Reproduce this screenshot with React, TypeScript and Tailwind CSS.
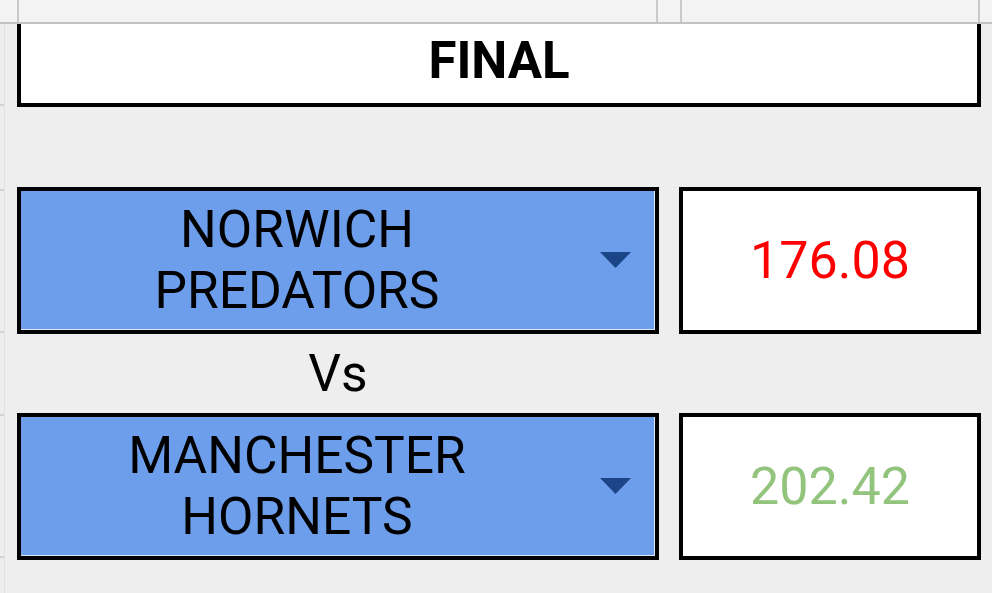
import React from "react";

function Arrow() {
  return (
    <svg width="31" height="16" viewBox="0 0 31 16" className="shrink-0">
      <polygon points="0,0 31,0 15.5,16" fill="#1c4587" />
    </svg>
  );
}

function TeamRow({ lines, score, color }: { lines: string[]; score: string; color: string }) {
  return (
    <div className="flex gap-[20px] h-[147px] shrink-0">
      <div className="w-[642px] h-full border-4 border-black bg-[#6d9eeb]">
        <div className="h-full flex items-center border-r border-b border-[#dfe7f6]">
          <div className="w-[552px] text-center text-[51.5px] leading-[61px] text-black">
            {lines.map((l) => (
              <div key={l}>{l}</div>
            ))}
          </div>
          <div className="ml-[27px]">
            <Arrow />
          </div>
        </div>
      </div>
      <div className={`w-[302px] h-full border-4 border-black bg-white flex items-center justify-center text-[52px] ${color}`}>
        {score}
      </div>
    </div>
  );
}

export default function App() {
  return (
    <div className="w-[992px] h-[593px] bg-[#eeeeee] overflow-hidden flex flex-col font-['Roboto',sans-serif]">
      <div className="h-[24px] shrink-0 flex bg-[#f3f3f3] border-b-2 border-[#c2c2c2]">
        <div className="w-[19px] border-r-2 border-[#c9c9c9]" />
        <div className="w-[639px] border-r-2 border-[#c9c9c9]" />
        <div className="w-[24px] border-r-2 border-[#c9c9c9]" />
        <div className="w-[298px] border-r-2 border-[#c9c9c9]" />
        <div className="flex-1" />
      </div>
      <div className="flex-1 flex">
        <div className="w-[5px] flex flex-col border-r border-[#e0e0e0]">
          <div className="h-[82px] border-b-2 border-[#d2d2d2]" />
          <div className="h-[85px] border-b-2 border-[#d2d2d2]" />
          <div className="h-[142px] border-b-2 border-[#d2d2d2]" />
          <div className="h-[83px] border-b-2 border-[#d2d2d2]" />
          <div className="h-[142px] border-b-2 border-[#d2d2d2]" />
          <div className="flex-1" />
        </div>
        <div className="flex-1 pl-[12px] flex flex-col">
          <div className="w-[964px] h-[83px] shrink-0 bg-white border-x-4 border-b-4 border-black flex items-center justify-center pb-[5px] text-[51px] font-bold text-black">
            FINAL
          </div>
          <div className="h-[80px] shrink-0" />
          <TeamRow lines={["NORWICH", "PREDATORS"]} score="176.08" color="text-[#ff0000]" />
          <div className="w-[642px] h-[79px] shrink-0 flex items-center justify-center text-[51.5px] text-black">
            Vs
          </div>
          <TeamRow lines={["MANCHESTER", "HORNETS"]} score="202.42" color="text-[#93c47d]" />
        </div>
      </div>
    </div>
  );
}
